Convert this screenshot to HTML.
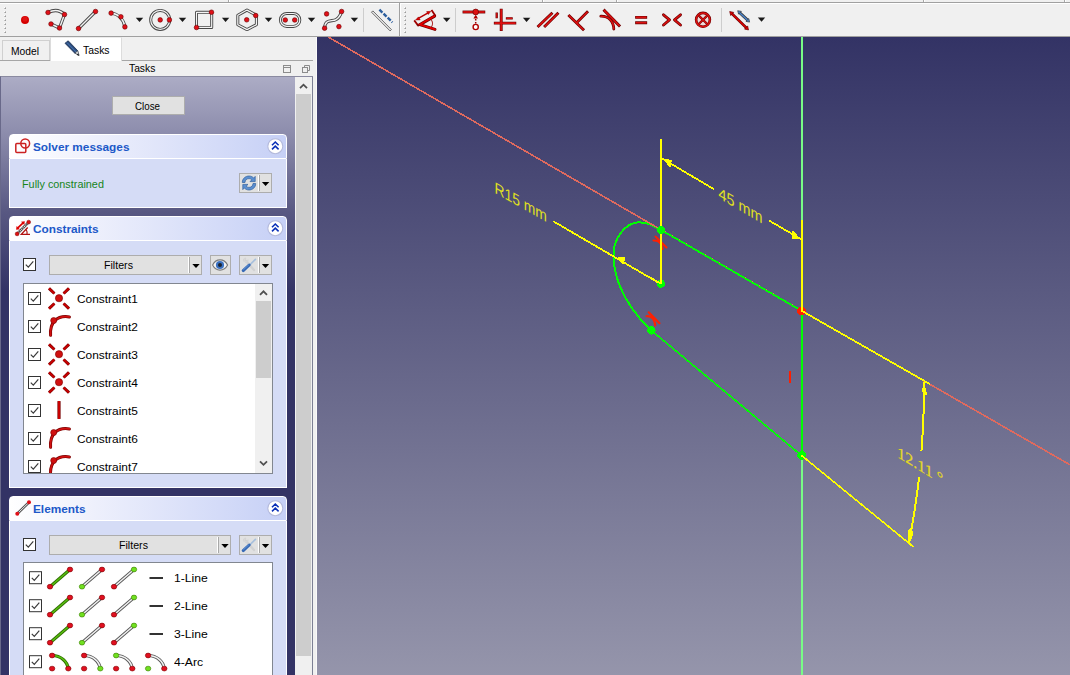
<!DOCTYPE html>
<html>
<head>
<meta charset="utf-8">
<title>FreeCAD Sketcher</title>
<style>
*{box-sizing:border-box;margin:0;padding:0}
html,body{width:1070px;height:675px;overflow:hidden;background:#f0f0f0;font-family:"Liberation Sans",sans-serif;font-size:12px;color:#000}
.abs{position:absolute}
#topline{left:0;top:2px;width:1070px;height:1px;background:#a0a0a0}
#topline2{left:0;top:3px;width:1070px;height:1px;background:#fff}
#tbline{left:0;top:36px;width:1070px;height:1px;background:#a0a0a0}
#canvas{left:317px;top:37px;width:753px;height:638px;background:linear-gradient(#333365 0%,#9595ab 100%)}
#left{left:0;top:37px;width:317px;height:638px;background:#f0f0f0}
.tab{position:absolute;font-size:12px;text-align:center}
#scroll{left:0;top:76px;width:295px;height:599px;border-left:1px solid #69698a;border-top:1px solid #8a8aa0;background:linear-gradient(#acacc5 0px,#8c8cac 57px,#585882 135px,#333365 215px,#333365 100%)}
.box{position:absolute;left:9px;width:278px;background:#d5dcf6;border:1px solid #fff;border-top:none}
.hdr{position:absolute;left:9px;width:278px;height:25px;border:1px solid #fff;border-bottom:1px solid #fff;border-radius:4px 4px 0 0;background:linear-gradient(90deg,#fff 0%,#eef0fc 30%,#c6d0f6 100%);font-weight:bold;color:#215dc6;font-size:12px;line-height:23px;padding-left:23px}
.btn{position:absolute;background:#e1e1e1;border:1px solid #adadad;text-align:center;font-size:12px}
.list{position:absolute;background:#fff;border:1px solid #828790}
.row{position:absolute;left:0;height:28px;font-size:12px}
.t{white-space:nowrap;line-height:14px;transform-origin:0 0;font-size:11px}
.hb{font-weight:bold;color:#2058c8;font-size:11px}
.lt{font-size:11.7px}
.cb{position:absolute;width:13px;height:13px;border:1px solid #333;background:#fff}
</style>
</head>
<body>
<div class="abs" id="topline"></div>
<div class="abs" id="topline2"></div>
<div class="abs" id="tbline"></div>
<svg class="abs" style="left:0;top:0" width="1070" height="37" viewBox="0 0 1070 37">
<rect x="228" y="0" width="1" height="2" fill="#a8a8a8"/><rect x="229" y="0" width="1" height="2" fill="#fff"/><rect x="542" y="0" width="1" height="2" fill="#a8a8a8"/><rect x="543" y="0" width="1" height="2" fill="#fff"/><rect x="616" y="0" width="1" height="2" fill="#a8a8a8"/><rect x="617" y="0" width="1" height="2" fill="#fff"/><rect x="923" y="0" width="1" height="2" fill="#a8a8a8"/><rect x="924" y="0" width="1" height="2" fill="#fff"/><rect x="1064" y="0" width="1" height="2" fill="#a8a8a8"/><rect x="1065" y="0" width="1" height="2" fill="#fff"/><rect x="399" y="3" width="1" height="33" fill="#a0a0a0"/><rect x="400" y="3" width="1" height="33" fill="#fff"/>
<rect x="4" y="7" width="1" height="1" fill="#fff"/><rect x="5" y="7" width="1" height="1" fill="#c4c4c4"/><rect x="4" y="8" width="1" height="1" fill="#c4c4c4"/><rect x="5" y="8" width="1" height="1" fill="#9a9a9a"/><rect x="4" y="11" width="1" height="1" fill="#fff"/><rect x="5" y="11" width="1" height="1" fill="#c4c4c4"/><rect x="4" y="12" width="1" height="1" fill="#c4c4c4"/><rect x="5" y="12" width="1" height="1" fill="#9a9a9a"/><rect x="4" y="15" width="1" height="1" fill="#fff"/><rect x="5" y="15" width="1" height="1" fill="#c4c4c4"/><rect x="4" y="16" width="1" height="1" fill="#c4c4c4"/><rect x="5" y="16" width="1" height="1" fill="#9a9a9a"/><rect x="4" y="19" width="1" height="1" fill="#fff"/><rect x="5" y="19" width="1" height="1" fill="#c4c4c4"/><rect x="4" y="20" width="1" height="1" fill="#c4c4c4"/><rect x="5" y="20" width="1" height="1" fill="#9a9a9a"/><rect x="4" y="23" width="1" height="1" fill="#fff"/><rect x="5" y="23" width="1" height="1" fill="#c4c4c4"/><rect x="4" y="24" width="1" height="1" fill="#c4c4c4"/><rect x="5" y="24" width="1" height="1" fill="#9a9a9a"/><rect x="4" y="27" width="1" height="1" fill="#fff"/><rect x="5" y="27" width="1" height="1" fill="#c4c4c4"/><rect x="4" y="28" width="1" height="1" fill="#c4c4c4"/><rect x="5" y="28" width="1" height="1" fill="#9a9a9a"/><rect x="4" y="31" width="1" height="1" fill="#fff"/><rect x="5" y="31" width="1" height="1" fill="#c4c4c4"/><rect x="4" y="32" width="1" height="1" fill="#c4c4c4"/><rect x="5" y="32" width="1" height="1" fill="#9a9a9a"/>
<rect x="404" y="7" width="1" height="1" fill="#fff"/><rect x="405" y="7" width="1" height="1" fill="#c4c4c4"/><rect x="404" y="8" width="1" height="1" fill="#c4c4c4"/><rect x="405" y="8" width="1" height="1" fill="#9a9a9a"/><rect x="404" y="11" width="1" height="1" fill="#fff"/><rect x="405" y="11" width="1" height="1" fill="#c4c4c4"/><rect x="404" y="12" width="1" height="1" fill="#c4c4c4"/><rect x="405" y="12" width="1" height="1" fill="#9a9a9a"/><rect x="404" y="15" width="1" height="1" fill="#fff"/><rect x="405" y="15" width="1" height="1" fill="#c4c4c4"/><rect x="404" y="16" width="1" height="1" fill="#c4c4c4"/><rect x="405" y="16" width="1" height="1" fill="#9a9a9a"/><rect x="404" y="19" width="1" height="1" fill="#fff"/><rect x="405" y="19" width="1" height="1" fill="#c4c4c4"/><rect x="404" y="20" width="1" height="1" fill="#c4c4c4"/><rect x="405" y="20" width="1" height="1" fill="#9a9a9a"/><rect x="404" y="23" width="1" height="1" fill="#fff"/><rect x="405" y="23" width="1" height="1" fill="#c4c4c4"/><rect x="404" y="24" width="1" height="1" fill="#c4c4c4"/><rect x="405" y="24" width="1" height="1" fill="#9a9a9a"/><rect x="404" y="27" width="1" height="1" fill="#fff"/><rect x="405" y="27" width="1" height="1" fill="#c4c4c4"/><rect x="404" y="28" width="1" height="1" fill="#c4c4c4"/><rect x="405" y="28" width="1" height="1" fill="#9a9a9a"/><rect x="404" y="31" width="1" height="1" fill="#fff"/><rect x="405" y="31" width="1" height="1" fill="#c4c4c4"/><rect x="404" y="32" width="1" height="1" fill="#c4c4c4"/><rect x="405" y="32" width="1" height="1" fill="#9a9a9a"/>
<circle cx="25" cy="20" r="4" fill="#d40000"/><circle cx="25" cy="19" r="2.6" fill="#e82020" opacity="0.6"/>
<path d="M48,12.5 C54,9.5 60,10 64.5,14.5 L59.5,28 L51,24" fill="none" stroke="#474747" stroke-width="3.2" stroke-linecap="round" stroke-linejoin="round"/><path d="M48,12.5 C54,9.5 60,10 64.5,14.5 L59.5,28 L51,24" fill="none" stroke="#f4f4f4" stroke-width="1.4" stroke-linecap="round" stroke-linejoin="round"/>
<circle cx="48" cy="12.5" r="2.3" fill="#e01018" stroke="#6a0000" stroke-width="0.6"/>
<circle cx="64.5" cy="14.5" r="2.3" fill="#e01018" stroke="#6a0000" stroke-width="0.6"/>
<circle cx="51" cy="24" r="2.3" fill="#e01018" stroke="#6a0000" stroke-width="0.6"/>
<circle cx="59.5" cy="28" r="2.3" fill="#e01018" stroke="#6a0000" stroke-width="0.6"/>
<path d="M78.5,28.5 L95.5,11.5" fill="none" stroke="#474747" stroke-width="3.2" stroke-linecap="round" stroke-linejoin="round"/><path d="M78.5,28.5 L95.5,11.5" fill="none" stroke="#f4f4f4" stroke-width="1.4" stroke-linecap="round" stroke-linejoin="round"/>
<circle cx="78.5" cy="28.5" r="2.3" fill="#e01018" stroke="#6a0000" stroke-width="0.6"/>
<circle cx="95.5" cy="11.5" r="2.3" fill="#e01018" stroke="#6a0000" stroke-width="0.6"/>
<path d="M111,13 C118,14 123.5,19 125,27" fill="none" stroke="#474747" stroke-width="3.2" stroke-linecap="round" stroke-linejoin="round"/><path d="M111,13 C118,14 123.5,19 125,27" fill="none" stroke="#f4f4f4" stroke-width="1.4" stroke-linecap="round" stroke-linejoin="round"/>
<circle cx="111.1" cy="13.1" r="2.3" fill="#e01018" stroke="#6a0000" stroke-width="0.6"/>
<circle cx="120.9" cy="16.8" r="2.3" fill="#e01018" stroke="#6a0000" stroke-width="0.6"/>
<circle cx="124.9" cy="26.9" r="2.3" fill="#e01018" stroke="#6a0000" stroke-width="0.6"/>
<polygon points="135.8,17.8 143.2,17.8 139.5,22.0" fill="#1a1a1a"/>
<circle cx="160.2" cy="19.9" r="9.5" fill="none" stroke="#474747" stroke-width="3"/><circle cx="160.2" cy="19.9" r="9.5" fill="none" stroke="#f4f4f4" stroke-width="1.2"/>
<circle cx="160.2" cy="19.9" r="2.3" fill="#e01018" stroke="#6a0000" stroke-width="0.6"/>
<circle cx="169.4" cy="19.9" r="2.3" fill="#e01018" stroke="#6a0000" stroke-width="0.6"/>
<polygon points="178.8,17.8 186.2,17.8 182.5,22.0" fill="#1a1a1a"/>
<path d="M196.5,12.3 H211.7 V27.4 H196.5 Z" fill="none" stroke="#474747" stroke-width="3" stroke-linecap="round" stroke-linejoin="round"/><path d="M196.5,12.3 H211.7 V27.4 H196.5 Z" fill="none" stroke="#f4f4f4" stroke-width="1.2" stroke-linecap="round" stroke-linejoin="round"/>
<circle cx="211.5" cy="12.2" r="2.3" fill="#e01018" stroke="#6a0000" stroke-width="0.6"/>
<circle cx="196.5" cy="27.5" r="2.3" fill="#e01018" stroke="#6a0000" stroke-width="0.6"/>
<polygon points="221.9,17.8 229.29999999999998,17.8 225.6,22.0" fill="#1a1a1a"/>
<path d="M247,10.1 L256.4,15.2 L256.4,24.7 L247,29.6 L237.8,24.7 L237.8,15.2 Z" fill="none" stroke="#474747" stroke-width="3" stroke-linecap="round" stroke-linejoin="round"/><path d="M247,10.1 L256.4,15.2 L256.4,24.7 L247,29.6 L237.8,24.7 L237.8,15.2 Z" fill="none" stroke="#f4f4f4" stroke-width="1.2" stroke-linecap="round" stroke-linejoin="round"/>
<circle cx="246.7" cy="19.8" r="2.3" fill="#e01018" stroke="#6a0000" stroke-width="0.6"/>
<circle cx="255.7" cy="15.5" r="2.3" fill="#e01018" stroke="#6a0000" stroke-width="0.6"/>
<polygon points="264.8,17.8 272.2,17.8 268.5,22.0" fill="#1a1a1a"/>
<rect x="280.4" y="13.5" width="19.4" height="12.9" rx="6.45" fill="none" stroke="#474747" stroke-width="3"/><rect x="280.4" y="13.5" width="19.4" height="12.9" rx="6.45" fill="none" stroke="#f4f4f4" stroke-width="1.2"/>
<circle cx="285.3" cy="20" r="2.3" fill="#e01018" stroke="#6a0000" stroke-width="0.6"/>
<circle cx="294.7" cy="20" r="2.3" fill="#e01018" stroke="#6a0000" stroke-width="0.6"/>
<polygon points="307.8,17.8 315.2,17.8 311.5,22.0" fill="#1a1a1a"/>
<path d="M324.6,28.2 C325,18.5 332,21.8 336,19.6 C339.6,17.6 340.6,15 341.6,11.5" fill="none" stroke="#474747" stroke-width="3.2" stroke-linecap="round" stroke-linejoin="round"/><path d="M324.6,28.2 C325,18.5 332,21.8 336,19.6 C339.6,17.6 340.6,15 341.6,11.5" fill="none" stroke="#f4f4f4" stroke-width="1.4" stroke-linecap="round" stroke-linejoin="round"/>
<circle cx="326.6" cy="13.9" r="2.3" fill="#e01018" stroke="#6a0000" stroke-width="0.6"/>
<circle cx="341.6" cy="11.5" r="2.3" fill="#e01018" stroke="#6a0000" stroke-width="0.6"/>
<circle cx="324.6" cy="28.2" r="2.3" fill="#e01018" stroke="#6a0000" stroke-width="0.6"/>
<circle cx="338.9" cy="26.6" r="2.3" fill="#e01018" stroke="#6a0000" stroke-width="0.6"/>
<polygon points="350.7,17.8 358.09999999999997,17.8 354.4,22.0" fill="#1a1a1a"/>
<rect x="363" y="8" width="1" height="24" fill="#cdcdcd"/>
<path d="M371.5,12.2 L372.8,10.9 L391.4,29.6 L390.1,30.9 Z" fill="#f4f4f4" stroke="#555" stroke-width="0.9"/>
<path d="M379.4,9.6 L392.4,22.3" stroke="#2d5f9e" stroke-width="2.4" stroke-dasharray="4.2,1.6" fill="none"/>
<path d="M414.2,20.4 L418.7,26.3 M431.5,9.9 L435.5,16.1" fill="none" stroke="#a00000" stroke-width="1.8"/><path d="M417.4,18.9 L429,12.3" fill="none" stroke="#b80000" stroke-width="1.5"/><polygon points="415.6,19.9 418.5,16.9 420.2,19.9" fill="#e00000" stroke="#900000" stroke-width="0.5"/><polygon points="430.8,11.3 426.6,11.6 428.3,14.5" fill="#e00000" stroke="#900000" stroke-width="0.5"/><path d="M430.8,19.4 C433,21.5 433,25 431.2,27.2" fill="none" stroke="#a00000" stroke-width="1"/><path d="M434.6,16.1 L419.9,24.6 L435,29.4" fill="none" stroke="#6a0000" stroke-width="3" stroke-linejoin="miter" stroke-linecap="round"/><path d="M434.6,16.1 L419.9,24.6 L435,29.4" fill="none" stroke="#e60000" stroke-width="1.7" stroke-linejoin="miter" stroke-linecap="round"/><polygon points="443.0,17.8 450.4,17.8 446.7,22.0" fill="#1a1a1a"/>
<rect x="455" y="8" width="1" height="24" fill="#cdcdcd"/>
<path d="M464,12 H483.8" fill="none" stroke="#6a0000" stroke-width="2.9" stroke-linecap="square" stroke-linejoin="miter"/><path d="M464,12 H483.8" fill="none" stroke="#dd1010" stroke-width="1.7" stroke-linecap="square" stroke-linejoin="miter"/>
<circle cx="475.7" cy="12" r="2.9" fill="#dd1010" stroke="#6a0000" stroke-width="0.7"/>
<path d="M475.7,16 V23.5" stroke="#a00000" stroke-width="1.5" stroke-dasharray="1.6,1.4" fill="none"/><polygon points="475.7,14.8 473.4,18.4 478,18.4" fill="#b00000"/>
<circle cx="475.7" cy="27" r="2.6" fill="#fff" stroke="#b00000" stroke-width="1.4"/>
<path d="M501.2,10.2 V29.6 M495.3,23.1 H514.8" fill="none" stroke="#6a0000" stroke-width="2.9" stroke-linecap="square" stroke-linejoin="miter"/><path d="M501.2,10.2 V29.6 M495.3,23.1 H514.8" fill="none" stroke="#dd1010" stroke-width="1.7" stroke-linecap="square" stroke-linejoin="miter"/>
<path d="M496.7,13.6 V17.2 M507,18.4 H511.6" fill="none" stroke="#6a0000" stroke-width="2.3" stroke-linecap="square" stroke-linejoin="miter"/><path d="M496.7,13.6 V17.2 M507,18.4 H511.6" fill="none" stroke="#dd1010" stroke-width="1.1" stroke-linecap="square" stroke-linejoin="miter"/>
<polygon points="522.9,17.8 530.3000000000001,17.8 526.6,22.0" fill="#1a1a1a"/>
<path d="M538.6,26 L551.4,13.8 M545.1,26 L557.4,13.8" fill="none" stroke="#6a0000" stroke-width="2.9" stroke-linecap="square" stroke-linejoin="round"/><path d="M538.6,26 L551.4,13.8 M545.1,26 L557.4,13.8" fill="none" stroke="#dd1010" stroke-width="1.6" stroke-linecap="square" stroke-linejoin="round"/>
<path d="M569.4,16 L583,29.3 M587,12.3 L577.4,21.9" fill="none" stroke="#6a0000" stroke-width="2.9" stroke-linecap="square" stroke-linejoin="round"/><path d="M569.4,16 L583,29.3 M587,12.3 L577.4,21.9" fill="none" stroke="#dd1010" stroke-width="1.6" stroke-linecap="square" stroke-linejoin="round"/>
<path d="M604.6,10.7 L619,25.4" fill="none" stroke="#6a0000" stroke-width="3.0" stroke-linecap="square" stroke-linejoin="round"/><path d="M604.6,10.7 L619,25.4" fill="none" stroke="#dd1010" stroke-width="1.7" stroke-linecap="square" stroke-linejoin="round"/>
<path d="M600.8,16.2 C609,16 613.6,21.5 613.8,29" fill="none" stroke="#6a0000" stroke-width="2.8" stroke-linecap="round" stroke-linejoin="round"/><path d="M600.8,16.2 C609,16 613.6,21.5 613.8,29" fill="none" stroke="#dd1010" stroke-width="1.5" stroke-linecap="round" stroke-linejoin="round"/>
<path d="M636.6,17.4 H645.7 M636.6,22.7 H645.7" fill="none" stroke="#6a0000" stroke-width="2.9" stroke-linecap="square" stroke-linejoin="round"/><path d="M636.6,17.4 H645.7 M636.6,22.7 H645.7" fill="none" stroke="#dd1010" stroke-width="1.6" stroke-linecap="square" stroke-linejoin="round"/>
<path d="M663.5,14.8 L669.5,19.9 L663.5,25 M680.5,14.8 L674.5,19.9 L680.5,25" fill="none" stroke="#6a0000" stroke-width="2.9" stroke-linecap="round" stroke-linejoin="round"/><path d="M663.5,14.8 L669.5,19.9 L663.5,25 M680.5,14.8 L674.5,19.9 L680.5,25" fill="none" stroke="#dd1010" stroke-width="1.5" stroke-linecap="round" stroke-linejoin="round"/>
<circle cx="703" cy="19.8" r="6.9" fill="#f0dcdc" stroke="#6a0000" stroke-width="2.6"/><circle cx="703" cy="19.8" r="6.9" fill="none" stroke="#dd1010" stroke-width="1.5"/>
<path d="M698.8,15.6 L707.2,24 M707.2,15.6 L698.8,24" fill="none" stroke="#6a0000" stroke-width="2.2"/><path d="M698.8,15.6 L707.2,24 M707.2,15.6 L698.8,24" fill="none" stroke="#dd1010" stroke-width="1.2"/>
<rect x="721" y="8" width="1" height="24" fill="#cdcdcd"/>
<path d="M731.5,13.3 L746.8,28.2" stroke="#6a0000" stroke-width="2.6" fill="none"/><path d="M731.5,13.3 L746.8,28.2" stroke="#e00000" stroke-width="1.3" fill="none"/><polygon points="729.7,11.5 733.7,12.4 730.7,15.5" fill="#e00000" stroke="#6a0000" stroke-width="0.7"/><polygon points="748.5,29.9 744.5,29.1 747.6,25.9" fill="#e00000" stroke="#6a0000" stroke-width="0.7"/><path d="M739.3,12.4 L748,20.4" stroke="#3a3a3a" stroke-width="2.8" fill="none"/><path d="M739.3,12.4 L748,20.4" stroke="#4a86d0" stroke-width="1.4" fill="none"/><polygon points="737.7,10.7 741.4,11.4 738.6,14.2" fill="#4a86d0" stroke="#3a3a3a" stroke-width="0.7"/><polygon points="749.6,22.1 745.9,21.4 748.8,18.6" fill="#4a86d0" stroke="#3a3a3a" stroke-width="0.7"/><polygon points="757.8,17.6 765.2,17.6 761.5,21.8" fill="#1a1a1a"/>
</svg>
<div class="abs" id="left">
</div>
<div class="abs" id="scroll"></div>
<div class="abs" style="left:316px;top:37px;width:1px;height:638px;background:#fafafa"></div>
<div class="abs" style="left:312px;top:76px;width:1px;height:599px;background:#7c8094"></div>
<div class="abs" style="left:0;top:60px;width:313px;height:1px;background:#a6a6a6"></div>
<div class="abs" style="left:2px;top:40px;width:48px;height:20px;border:1px solid #d0d0d0;border-bottom:none;background:#f0f0f0"></div>
<div class="abs" style="left:50px;top:37px;width:72px;height:24px;border:1px solid #dcdcdc;border-top:1px solid #ececec;border-bottom:none;background:#fff"></div>
<div class="abs t" id="t_model" style="left:11.0px;top:44.0px;transform:scaleX(0.933)">Model</div>
<div class="abs t" id="t_tasks1" style="left:83.0px;top:43.0px;transform:scaleX(0.944)">Tasks</div>
<svg class="abs" style="left:62px;top:39px" width="20" height="20" viewBox="0 0 20 20"><path d="M3,4.3 L6.2,1.8 L15.8,11.8 L12.8,14.2 Z" fill="#2a4a7c" stroke="#1b2f50" stroke-width="0.8"/><path d="M5,3.6 L14.4,13.2" stroke="#4f7fbc" stroke-width="0.9"/><path d="M12.8,14.2 L15.8,11.8 L17,16.2 Z" fill="#f0f0f0" stroke="#39424f" stroke-width="0.8"/><path d="M15.4,14.9 L17.2,16.4 L15.2,15.9Z" fill="#1a1a1a" stroke="#1a1a1a" stroke-width="0.5"/></svg>
<div class="abs t" id="t_tasks2" style="left:129.0px;top:61.0px;transform:scaleX(0.936)">Tasks</div>
<svg class="abs" style="left:282px;top:64px" width="30" height="10" viewBox="282 64 30 10"><rect x="283.5" y="65.5" width="7" height="7" fill="none" stroke="#8c8c8c"/><line x1="283" y1="67.5" x2="291" y2="67.5" stroke="#8c8c8c"/><rect x="302.5" y="67.5" width="5" height="5" fill="none" stroke="#8c8c8c"/><path d="M304.5,67 V65.5 H309.5 V70.5 H308" fill="none" stroke="#8c8c8c"/></svg>
<div class="abs" style="left:295px;top:76px;width:18px;height:1px;background:#8a8aa0"></div><div class="abs" style="left:295px;top:77px;width:17px;height:598px;background:#f0f0f0"></div>
<div class="abs" style="left:296px;top:94px;width:15px;height:562px;background:#cdcdcd"></div>
<svg class="abs" style="left:295px;top:77px" width="17" height="17" viewBox="0 0 17 17"><path d="M5,11.2 L8.5,7.7 L12,11.2" fill="none" stroke="#505050" stroke-width="1.8"/></svg>
<div class="btn" style="left:112px;top:96px;width:73px;height:19px"></div>
<div class="abs t" id="t_close" style="left:134.7px;top:99.0px;transform:scaleX(0.887)">Close</div>
<div class="hdr" style="top:134px"></div>
<div class="abs t hb" id="t_solver" style="left:32.6px;top:140.0px;transform:scaleX(1.073)">Solver messages</div>
<svg class="abs" style="left:13px;top:136px" width="18" height="20" viewBox="13 136 18 20"><rect x="15.8" y="143.6" width="10" height="9" rx="1" fill="none" stroke="#cc2222" stroke-width="1.5"/><circle cx="25.2" cy="143.5" r="4.4" fill="none" stroke="#cc2222" stroke-width="1.5"/></svg>
<svg class="abs" style="left:266px;top:137px" width="18" height="18" viewBox="0 0 18 18"><circle cx="9.3" cy="9.2" r="7.5" fill="#fff" stroke="#b4badc" stroke-width="1.1"/><path d="M6,8.2 L9.3,5 L12.6,8.2 M6,12.4 L9.3,9.2 L12.6,12.4" fill="none" stroke="#0a30b8" stroke-width="1.6"/></svg>
<div class="box" style="top:159px;height:49px"></div>
<div class="abs t" id="t_fully" style="left:21.8px;top:177.0px;transform:scaleX(0.985);font-size:11px;color:#15851a">Fully constrained</div>
<div class="btn" style="left:239px;top:173px;width:33px;height:20px"></div>
<div class="abs" style="left:258px;top:175px;width:1px;height:16px;background:#fff"></div><div class="abs" style="left:259px;top:175px;width:1px;height:16px;background:#a8a8a8"></div>
<svg class="abs" style="left:239px;top:173px" width="33" height="20" viewBox="240 173 33 20"><path d="M243.3,182.5 C243.3,178.5 246.5,176 250,176 C252,176 253.6,176.8 254.6,178 L256.2,176.4 L256.2,181.6 L251,181.6 L252.8,179.8 C252,179 251,178.6 250,178.6 C247.8,178.6 246,180.2 246,182.5 Z" fill="#5b8fd0" stroke="#2f5f9e" stroke-width="0.7"/><path d="M256.7,183.5 C256.7,187.5 253.5,190 250,190 C248,190 246.4,189.2 245.4,188 L243.8,189.6 L243.8,184.4 L249,184.4 L247.2,186.2 C248,187 249,187.4 250,187.4 C252.2,187.4 254,185.8 254,183.5 Z" fill="#5b8fd0" stroke="#2f5f9e" stroke-width="0.7"/><polygon points="262.9,182 270.3,182 266.6,186" fill="#000"/></svg>
<div class="hdr" style="top:216px"></div>
<div class="abs t hb" id="t_constraints" style="left:32.8px;top:222.0px;transform:scaleX(1.073)">Constraints</div>
<svg class="abs" style="left:13px;top:218px" width="20" height="20" viewBox="13 218 20 20"><path d="M17.1,233.9 L28.7,222.1" stroke="#444" stroke-width="2.6"/><path d="M17.1,233.9 L28.7,222.1" stroke="#eee" stroke-width="1.3" stroke-dasharray="1,1"/><circle cx="17.1" cy="233.9" r="1.9" fill="#dd1010" stroke="#800" stroke-width="0.5"/><circle cx="28.7" cy="222.1" r="1.9" fill="#dd1010" stroke="#800" stroke-width="0.5"/><path d="M17.6,228.2 L23.4,222.7" stroke="#dd0000" stroke-width="1.7"/><polygon points="16.1,229.7 16.6,225.9 19.9,229.2" fill="#dd0000"/><polygon points="24.8,221.3 21,221.8 24.3,225.1" fill="#dd0000"/><path d="M30,234.4 H21.3 L27.7,227.5" fill="none" stroke="#b01010" stroke-width="1.3"/><path d="M26.2,229.6 C27,231 27.2,232.6 27,234.2" fill="none" stroke="#b01010" stroke-width="1.1"/></svg>
<svg class="abs" style="left:266px;top:219px" width="18" height="18" viewBox="0 0 18 18"><circle cx="9.3" cy="9.2" r="7.5" fill="#fff" stroke="#b4badc" stroke-width="1.1"/><path d="M6,8.2 L9.3,5 L12.6,8.2 M6,12.4 L9.3,9.2 L12.6,12.4" fill="none" stroke="#0a30b8" stroke-width="1.6"/></svg>
<div class="box" style="top:241px;height:247px"></div>
<svg class="abs" style="left:23px;top:258px" width="13" height="13" viewBox="0 0 13 13"><rect x="0.5" y="0.5" width="12" height="12" fill="#fff" stroke="#333"/><path d="M2.8,6.6 L5.3,9.2 L10.3,3.4" fill="none" stroke="#3a3a3a" stroke-width="1.2"/></svg>
<div class="btn" style="left:49px;top:255px;width:153px;height:20px"></div>
<div class="abs" style="left:188px;top:257px;width:1px;height:16px;background:#fff"></div><div class="abs" style="left:189px;top:257px;width:1px;height:16px;background:#a8a8a8"></div>
<svg class="abs" style="left:190px;top:255px" width="12" height="20" viewBox="0 0 12 20"><polygon points="2.3,8.9 9.7,8.9 6,13" fill="#000"/></svg>
<div class="abs t" id="t_filters1" style="left:104.2px;top:257.5px;transform:scaleX(0.967)">Filters</div>
<div class="btn" style="left:210px;top:255px;width:21px;height:20px"></div>
<svg class="abs" style="left:210px;top:255px" width="21" height="20" viewBox="0 0 21 20"><path d="M2.6,10 C6,3.2 14,3.2 17.6,10 C14,16.8 6,16.8 2.6,10 Z" fill="#f4f4f4" stroke="#7a7a7a" stroke-width="1.1"/><circle cx="10" cy="10" r="4.1" fill="#3b72c2"/><circle cx="10" cy="10" r="2" fill="#1c2430"/></svg>
<div class="btn" style="left:239px;top:255px;width:33px;height:20px"></div><div class="abs" style="left:258px;top:257px;width:1px;height:16px;background:#fff"></div><div class="abs" style="left:259px;top:257px;width:1px;height:16px;background:#a8a8a8"></div><svg class="abs" style="left:239px;top:255px" width="33" height="20" viewBox="0 0 33 20"><path d="M6.5,5.5 L15,15" stroke="#d2d2d2" stroke-width="2.4" stroke-linecap="round"/><path d="M4.6,6.4 C3.6,4.4 5.2,2.6 7,3 L6,5 L7.6,6.2 L9,4.6 C9.8,6.4 8,8.2 6.2,7.6" fill="#d8d8d8" stroke="#cfcfcf" stroke-width="0.5"/><path d="M10.8,9.8 L16.4,4.4" stroke="#a8c0dc" stroke-width="1.7" stroke-linecap="round"/><path d="M4.2,15.6 L10.2,10" stroke="#3568b4" stroke-width="3" stroke-linecap="round"/><path d="M4.6,14.6 L9.6,10" stroke="#6a98d8" stroke-width="0.9" stroke-linecap="round"/><polygon points="22.8,8.9 30.2,8.9 26.5,13" fill="#000"/></svg>
<div class="list" style="left:23px;top:283px;width:250px;height:191px;overflow:hidden" id="clist"><svg class="abs" style="left:0;top:0" width="248" height="189" viewBox="24 284 248 189">
<rect x="28.5" y="292.5" width="12" height="12" fill="#fff" stroke="#333"/><path d="M30.8,298.6 L33.3,301.2 L38.3,295.4" fill="none" stroke="#3a3a3a" stroke-width="1.2"/>
<path d="M49,288.3 L54.4,293.5" fill="none" stroke="#7a0000" stroke-width="3" stroke-linecap="butt"/><path d="M49,288.3 L54.4,293.5" fill="none" stroke="#c80000" stroke-width="1.8" stroke-linecap="butt"/><path d="M49,308.7 L54.4,303.5" fill="none" stroke="#7a0000" stroke-width="3" stroke-linecap="butt"/><path d="M49,308.7 L54.4,303.5" fill="none" stroke="#c80000" stroke-width="1.8" stroke-linecap="butt"/><path d="M69,288.3 L63.6,293.5" fill="none" stroke="#7a0000" stroke-width="3" stroke-linecap="butt"/><path d="M69,288.3 L63.6,293.5" fill="none" stroke="#c80000" stroke-width="1.8" stroke-linecap="butt"/><path d="M69,308.7 L63.6,303.5" fill="none" stroke="#7a0000" stroke-width="3" stroke-linecap="butt"/><path d="M69,308.7 L63.6,303.5" fill="none" stroke="#c80000" stroke-width="1.8" stroke-linecap="butt"/><circle cx="59" cy="298.2" r="3.6" fill="#d01010" stroke="#7a0000" stroke-width="0.6"/>
<rect x="28.5" y="320.5" width="12" height="12" fill="#fff" stroke="#333"/><path d="M30.8,326.6 L33.3,329.2 L38.3,323.4" fill="none" stroke="#3a3a3a" stroke-width="1.2"/>
<path d="M69.4,316.9 C57,315.0 49.5,322.5 50.6,335.3" fill="none" stroke="#7a0000" stroke-width="3" stroke-linecap="round"/><path d="M69.4,316.9 C57,315.0 49.5,322.5 50.6,335.3" fill="none" stroke="#d01010" stroke-width="1.7" stroke-linecap="round"/><circle cx="53.7" cy="320.5" r="3" fill="#d01010" stroke="#7a0000" stroke-width="0.6"/>
<rect x="28.5" y="348.5" width="12" height="12" fill="#fff" stroke="#333"/><path d="M30.8,354.6 L33.3,357.2 L38.3,351.4" fill="none" stroke="#3a3a3a" stroke-width="1.2"/>
<path d="M49,344.3 L54.4,349.5" fill="none" stroke="#7a0000" stroke-width="3" stroke-linecap="butt"/><path d="M49,344.3 L54.4,349.5" fill="none" stroke="#c80000" stroke-width="1.8" stroke-linecap="butt"/><path d="M49,364.7 L54.4,359.5" fill="none" stroke="#7a0000" stroke-width="3" stroke-linecap="butt"/><path d="M49,364.7 L54.4,359.5" fill="none" stroke="#c80000" stroke-width="1.8" stroke-linecap="butt"/><path d="M69,344.3 L63.6,349.5" fill="none" stroke="#7a0000" stroke-width="3" stroke-linecap="butt"/><path d="M69,344.3 L63.6,349.5" fill="none" stroke="#c80000" stroke-width="1.8" stroke-linecap="butt"/><path d="M69,364.7 L63.6,359.5" fill="none" stroke="#7a0000" stroke-width="3" stroke-linecap="butt"/><path d="M69,364.7 L63.6,359.5" fill="none" stroke="#c80000" stroke-width="1.8" stroke-linecap="butt"/><circle cx="59" cy="354.2" r="3.6" fill="#d01010" stroke="#7a0000" stroke-width="0.6"/>
<rect x="28.5" y="376.5" width="12" height="12" fill="#fff" stroke="#333"/><path d="M30.8,382.6 L33.3,385.2 L38.3,379.4" fill="none" stroke="#3a3a3a" stroke-width="1.2"/>
<path d="M49,372.3 L54.4,377.5" fill="none" stroke="#7a0000" stroke-width="3" stroke-linecap="butt"/><path d="M49,372.3 L54.4,377.5" fill="none" stroke="#c80000" stroke-width="1.8" stroke-linecap="butt"/><path d="M49,392.7 L54.4,387.5" fill="none" stroke="#7a0000" stroke-width="3" stroke-linecap="butt"/><path d="M49,392.7 L54.4,387.5" fill="none" stroke="#c80000" stroke-width="1.8" stroke-linecap="butt"/><path d="M69,372.3 L63.6,377.5" fill="none" stroke="#7a0000" stroke-width="3" stroke-linecap="butt"/><path d="M69,372.3 L63.6,377.5" fill="none" stroke="#c80000" stroke-width="1.8" stroke-linecap="butt"/><path d="M69,392.7 L63.6,387.5" fill="none" stroke="#7a0000" stroke-width="3" stroke-linecap="butt"/><path d="M69,392.7 L63.6,387.5" fill="none" stroke="#c80000" stroke-width="1.8" stroke-linecap="butt"/><circle cx="59" cy="382.2" r="3.6" fill="#d01010" stroke="#7a0000" stroke-width="0.6"/>
<rect x="28.5" y="404.5" width="12" height="12" fill="#fff" stroke="#333"/><path d="M30.8,410.6 L33.3,413.2 L38.3,407.4" fill="none" stroke="#3a3a3a" stroke-width="1.2"/>
<path d="M59,401.1 V418.9" fill="none" stroke="#7a0000" stroke-width="3.2" stroke-linecap="butt"/><path d="M59,401.1 V418.9" fill="none" stroke="#c80000" stroke-width="2.0" stroke-linecap="butt"/>
<rect x="28.5" y="432.5" width="12" height="12" fill="#fff" stroke="#333"/><path d="M30.8,438.6 L33.3,441.2 L38.3,435.4" fill="none" stroke="#3a3a3a" stroke-width="1.2"/>
<path d="M69.4,428.9 C57,427.0 49.5,434.5 50.6,447.3" fill="none" stroke="#7a0000" stroke-width="3" stroke-linecap="round"/><path d="M69.4,428.9 C57,427.0 49.5,434.5 50.6,447.3" fill="none" stroke="#d01010" stroke-width="1.7" stroke-linecap="round"/><circle cx="53.7" cy="432.5" r="3" fill="#d01010" stroke="#7a0000" stroke-width="0.6"/>
<rect x="28.5" y="460.5" width="12" height="12" fill="#fff" stroke="#333"/><path d="M30.8,466.6 L33.3,469.2 L38.3,463.4" fill="none" stroke="#3a3a3a" stroke-width="1.2"/>
<path d="M69.4,456.9 C57,455.0 49.5,462.5 50.6,475.3" fill="none" stroke="#7a0000" stroke-width="3" stroke-linecap="round"/><path d="M69.4,456.9 C57,455.0 49.5,462.5 50.6,475.3" fill="none" stroke="#d01010" stroke-width="1.7" stroke-linecap="round"/><circle cx="53.7" cy="460.5" r="3" fill="#d01010" stroke="#7a0000" stroke-width="0.6"/>
</svg>
<div class="abs t lt" id="t_c1" style="left:53.2px;top:8.3px;transform:scaleX(1.019)">Constraint1</div>
<div class="abs t lt" id="t_c2" style="left:53.2px;top:36.3px;transform:scaleX(1.019)">Constraint2</div>
<div class="abs t lt" id="t_c3" style="left:53.2px;top:64.3px;transform:scaleX(1.019)">Constraint3</div>
<div class="abs t lt" id="t_c4" style="left:53.2px;top:92.3px;transform:scaleX(1.019)">Constraint4</div>
<div class="abs t lt" id="t_c5" style="left:53.2px;top:120.3px;transform:scaleX(1.019)">Constraint5</div>
<div class="abs t lt" id="t_c6" style="left:53.2px;top:148.3px;transform:scaleX(1.019)">Constraint6</div>
<div class="abs t lt" id="t_c7" style="left:53.2px;top:176.3px;transform:scaleX(1.019)">Constraint7</div>
<div class="abs" style="left:231px;top:0;width:17px;height:189px;background:#f0f0f0"></div>
<div class="abs" style="left:232px;top:17px;width:15px;height:77px;background:#cdcdcd"></div>
<svg class="abs" style="left:231px;top:0" width="17" height="189" viewBox="0 0 17 189"><path d="M5,10.8 L8.5,7.3 L12,10.8" fill="none" stroke="#505050" stroke-width="1.8"/><path d="M5,177.3 L8.5,180.8 L12,177.3" fill="none" stroke="#505050" stroke-width="1.8"/></svg></div>
<div class="hdr" style="top:496px"></div>
<div class="abs t hb" id="t_elements" style="left:32.8px;top:502.0px;transform:scaleX(1.073)">Elements</div>
<svg class="abs" style="left:13px;top:498px" width="20" height="20" viewBox="13 498 20 20"><path d="M17.5,513.5 L28.8,502.5" stroke="#555" stroke-width="2.6"/><path d="M17.5,513.5 L28.8,502.5" stroke="#e8e8e8" stroke-width="1"/><circle cx="17.3" cy="513.8" r="2" fill="#e01018"/><circle cx="29" cy="502.3" r="2" fill="#e01018"/></svg>
<svg class="abs" style="left:266px;top:499px" width="18" height="18" viewBox="0 0 18 18"><circle cx="9.3" cy="9.2" r="7.5" fill="#fff" stroke="#b4badc" stroke-width="1.1"/><path d="M6,8.2 L9.3,5 L12.6,8.2 M6,12.4 L9.3,9.2 L12.6,12.4" fill="none" stroke="#0a30b8" stroke-width="1.6"/></svg>
<div class="box" style="top:521px;height:160px"></div>
<svg class="abs" style="left:23px;top:538px" width="13" height="13" viewBox="0 0 13 13"><rect x="0.5" y="0.5" width="12" height="12" fill="#fff" stroke="#333"/><path d="M2.8,6.6 L5.3,9.2 L10.3,3.4" fill="none" stroke="#3a3a3a" stroke-width="1.2"/></svg>
<div class="btn" style="left:49px;top:535px;width:182px;height:20px"></div>
<div class="abs" style="left:217px;top:537px;width:1px;height:16px;background:#fff"></div><div class="abs" style="left:218px;top:537px;width:1px;height:16px;background:#a8a8a8"></div>
<svg class="abs" style="left:219px;top:535px" width="12" height="20" viewBox="0 0 12 20"><polygon points="2.3,8.9 9.7,8.9 6,13" fill="#000"/></svg>
<div class="abs t" id="t_filters2" style="left:118.7px;top:537.5px;transform:scaleX(0.967)">Filters</div>
<div class="btn" style="left:239px;top:535px;width:33px;height:20px"></div><div class="abs" style="left:258px;top:537px;width:1px;height:16px;background:#fff"></div><div class="abs" style="left:259px;top:537px;width:1px;height:16px;background:#a8a8a8"></div><svg class="abs" style="left:239px;top:535px" width="33" height="20" viewBox="0 0 33 20"><path d="M6.5,5.5 L15,15" stroke="#d2d2d2" stroke-width="2.4" stroke-linecap="round"/><path d="M4.6,6.4 C3.6,4.4 5.2,2.6 7,3 L6,5 L7.6,6.2 L9,4.6 C9.8,6.4 8,8.2 6.2,7.6" fill="#d8d8d8" stroke="#cfcfcf" stroke-width="0.5"/><path d="M10.8,9.8 L16.4,4.4" stroke="#a8c0dc" stroke-width="1.7" stroke-linecap="round"/><path d="M4.2,15.6 L10.2,10" stroke="#3568b4" stroke-width="3" stroke-linecap="round"/><path d="M4.6,14.6 L9.6,10" stroke="#6a98d8" stroke-width="0.9" stroke-linecap="round"/><polygon points="22.8,8.9 30.2,8.9 26.5,13" fill="#000"/></svg>
<div class="list" style="left:23px;top:562px;width:250px;height:120px;overflow:hidden" id="elist"><svg class="abs" style="left:0;top:0" width="248" height="118" viewBox="24 563 248 118">
<rect x="29.5" y="571.7" width="12" height="12" fill="#fff" stroke="#333"/><path d="M31.8,577.8000000000001 L34.3,580.4000000000001 L39.3,574.6" fill="none" stroke="#3a3a3a" stroke-width="1.2"/>
<path d="M50,586.7 L70,569.5" stroke="#2f6a00" stroke-width="3.2" fill="none"/><path d="M50,586.7 L70,569.5" stroke="#58c010" stroke-width="1.5" fill="none"/><ellipse cx="50" cy="586.7" rx="2.7" ry="2.4" fill="#e01020" stroke="#800000" stroke-width="0.6"/><ellipse cx="70" cy="569.5" rx="2.7" ry="2.4" fill="#e01020" stroke="#800000" stroke-width="0.6"/>
<path d="M82,586.7 L102,569.5" stroke="#555" stroke-width="3.2" fill="none"/><path d="M82,586.7 L102,569.5" stroke="#f2f2f2" stroke-width="1.5" fill="none"/><ellipse cx="82" cy="586.7" rx="2.7" ry="2.4" fill="#70e020" stroke="#3a7a00" stroke-width="0.6"/><ellipse cx="102" cy="569.5" rx="2.7" ry="2.4" fill="#e01020" stroke="#800000" stroke-width="0.6"/>
<path d="M114,586.7 L134,569.5" stroke="#555" stroke-width="3.2" fill="none"/><path d="M114,586.7 L134,569.5" stroke="#f2f2f2" stroke-width="1.5" fill="none"/><ellipse cx="114" cy="586.7" rx="2.7" ry="2.4" fill="#e01020" stroke="#800000" stroke-width="0.6"/><ellipse cx="134" cy="569.5" rx="2.7" ry="2.4" fill="#70e020" stroke="#3a7a00" stroke-width="0.6"/>
<rect x="149.5" y="577.0" width="13.5" height="2" fill="#333"/>
<rect x="29.5" y="599.7" width="12" height="12" fill="#fff" stroke="#333"/><path d="M31.8,605.8000000000001 L34.3,608.4000000000001 L39.3,602.6" fill="none" stroke="#3a3a3a" stroke-width="1.2"/>
<path d="M50,614.7 L70,597.5" stroke="#2f6a00" stroke-width="3.2" fill="none"/><path d="M50,614.7 L70,597.5" stroke="#58c010" stroke-width="1.5" fill="none"/><ellipse cx="50" cy="614.7" rx="2.7" ry="2.4" fill="#e01020" stroke="#800000" stroke-width="0.6"/><ellipse cx="70" cy="597.5" rx="2.7" ry="2.4" fill="#e01020" stroke="#800000" stroke-width="0.6"/>
<path d="M82,614.7 L102,597.5" stroke="#555" stroke-width="3.2" fill="none"/><path d="M82,614.7 L102,597.5" stroke="#f2f2f2" stroke-width="1.5" fill="none"/><ellipse cx="82" cy="614.7" rx="2.7" ry="2.4" fill="#70e020" stroke="#3a7a00" stroke-width="0.6"/><ellipse cx="102" cy="597.5" rx="2.7" ry="2.4" fill="#e01020" stroke="#800000" stroke-width="0.6"/>
<path d="M114,614.7 L134,597.5" stroke="#555" stroke-width="3.2" fill="none"/><path d="M114,614.7 L134,597.5" stroke="#f2f2f2" stroke-width="1.5" fill="none"/><ellipse cx="114" cy="614.7" rx="2.7" ry="2.4" fill="#e01020" stroke="#800000" stroke-width="0.6"/><ellipse cx="134" cy="597.5" rx="2.7" ry="2.4" fill="#70e020" stroke="#3a7a00" stroke-width="0.6"/>
<rect x="149.5" y="605.0" width="13.5" height="2" fill="#333"/>
<rect x="29.5" y="627.7" width="12" height="12" fill="#fff" stroke="#333"/><path d="M31.8,633.8000000000001 L34.3,636.4000000000001 L39.3,630.6" fill="none" stroke="#3a3a3a" stroke-width="1.2"/>
<path d="M50,642.7 L70,625.5" stroke="#2f6a00" stroke-width="3.2" fill="none"/><path d="M50,642.7 L70,625.5" stroke="#58c010" stroke-width="1.5" fill="none"/><ellipse cx="50" cy="642.7" rx="2.7" ry="2.4" fill="#e01020" stroke="#800000" stroke-width="0.6"/><ellipse cx="70" cy="625.5" rx="2.7" ry="2.4" fill="#e01020" stroke="#800000" stroke-width="0.6"/>
<path d="M82,642.7 L102,625.5" stroke="#555" stroke-width="3.2" fill="none"/><path d="M82,642.7 L102,625.5" stroke="#f2f2f2" stroke-width="1.5" fill="none"/><ellipse cx="82" cy="642.7" rx="2.7" ry="2.4" fill="#70e020" stroke="#3a7a00" stroke-width="0.6"/><ellipse cx="102" cy="625.5" rx="2.7" ry="2.4" fill="#e01020" stroke="#800000" stroke-width="0.6"/>
<path d="M114,642.7 L134,625.5" stroke="#555" stroke-width="3.2" fill="none"/><path d="M114,642.7 L134,625.5" stroke="#f2f2f2" stroke-width="1.5" fill="none"/><ellipse cx="114" cy="642.7" rx="2.7" ry="2.4" fill="#e01020" stroke="#800000" stroke-width="0.6"/><ellipse cx="134" cy="625.5" rx="2.7" ry="2.4" fill="#70e020" stroke="#3a7a00" stroke-width="0.6"/>
<rect x="149.5" y="633.0" width="13.5" height="2" fill="#333"/>
<rect x="29.5" y="655.7" width="12" height="12" fill="#fff" stroke="#333"/><path d="M31.8,661.8000000000001 L34.3,664.4000000000001 L39.3,658.6" fill="none" stroke="#3a3a3a" stroke-width="1.2"/>
<path d="M52.1,655.5 C61.1,655.5 67.3,661.6 68.3,668.6" stroke="#2f6a00" stroke-width="3.2" fill="none"/><path d="M52.1,655.5 C61.1,655.5 67.3,661.6 68.3,668.6" stroke="#58c010" stroke-width="1.5" fill="none"/><ellipse cx="52.1" cy="655.5" rx="2.7" ry="2.4" fill="#e01020" stroke="#800000" stroke-width="0.6"/><ellipse cx="52.1" cy="668.6" rx="2.7" ry="2.4" fill="#e01020" stroke="#800000" stroke-width="0.6"/><ellipse cx="68.3" cy="668.6" rx="2.7" ry="2.4" fill="#e01020" stroke="#800000" stroke-width="0.6"/>
<path d="M84.1,655.5 C93.1,655.5 99.3,661.6 100.3,668.6" stroke="#555" stroke-width="3.2" fill="none"/><path d="M84.1,655.5 C93.1,655.5 99.3,661.6 100.3,668.6" stroke="#f2f2f2" stroke-width="1.5" fill="none"/><ellipse cx="84.1" cy="655.5" rx="2.7" ry="2.4" fill="#e01020" stroke="#800000" stroke-width="0.6"/><ellipse cx="84.1" cy="668.6" rx="2.7" ry="2.4" fill="#e01020" stroke="#800000" stroke-width="0.6"/><ellipse cx="100.3" cy="668.6" rx="2.7" ry="2.4" fill="#70e020" stroke="#3a7a00" stroke-width="0.6"/>
<path d="M116.1,655.5 C125.1,655.5 131.29999999999998,661.6 132.29999999999998,668.6" stroke="#555" stroke-width="3.2" fill="none"/><path d="M116.1,655.5 C125.1,655.5 131.29999999999998,661.6 132.29999999999998,668.6" stroke="#f2f2f2" stroke-width="1.5" fill="none"/><ellipse cx="116.1" cy="655.5" rx="2.7" ry="2.4" fill="#70e020" stroke="#3a7a00" stroke-width="0.6"/><ellipse cx="116.1" cy="668.6" rx="2.7" ry="2.4" fill="#e01020" stroke="#800000" stroke-width="0.6"/><ellipse cx="132.29999999999998" cy="668.6" rx="2.7" ry="2.4" fill="#e01020" stroke="#800000" stroke-width="0.6"/>
<path d="M148.1,655.5 C157.1,655.5 163.29999999999998,661.6 164.29999999999998,668.6" stroke="#555" stroke-width="3.2" fill="none"/><path d="M148.1,655.5 C157.1,655.5 163.29999999999998,661.6 164.29999999999998,668.6" stroke="#f2f2f2" stroke-width="1.5" fill="none"/><ellipse cx="148.1" cy="655.5" rx="2.7" ry="2.4" fill="#e01020" stroke="#800000" stroke-width="0.6"/><ellipse cx="148.1" cy="668.6" rx="2.7" ry="2.4" fill="#70e020" stroke="#3a7a00" stroke-width="0.6"/><ellipse cx="164.29999999999998" cy="668.6" rx="2.7" ry="2.4" fill="#e01020" stroke="#800000" stroke-width="0.6"/>
</svg>
<div class="abs t lt" id="t_e1" style="left:149.6px;top:7.5px;transform:scaleX(1.042)">1-Line</div>
<div class="abs t lt" id="t_e2" style="left:149.6px;top:35.5px;transform:scaleX(1.042)">2-Line</div>
<div class="abs t lt" id="t_e3" style="left:149.6px;top:63.5px;transform:scaleX(1.042)">3-Line</div>
<div class="abs t lt" id="t_e4" style="left:149.6px;top:91.5px;transform:scaleX(1.042)">4-Arc</div></div>
<div class="abs" id="canvas">
<svg width="753" height="638" viewBox="317 37 753 638" style="position:absolute;left:0;top:0">

<!-- tangent icons -->
<g fill="none" stroke="#ff2000" stroke-width="2.1" stroke-linecap="round">
<path d="M655.5,236.5 L666.5,247.5"/>
<path d="M653.5,240.5 C658,240 661.5,243 662.5,249"/>
<path d="M648.7,312.3 L659.5,323.2"/>
<path d="M646.5,316.2 C651,315.8 654.5,319 655.3,325.5"/>
</g>
<g shape-rendering="crispEdges" fill="none">
<!-- red H axis -->
<polyline points="327.6,36.6 660.4,229.4 801.3,310.4 1070,464.8" stroke="#e06a5e" stroke-width="1.6"/>


<!-- V axis light green -->
<rect x="801" y="37" width="2" height="638" fill="#78fc86" stroke="none"/>
<!-- yellow ext line on V axis -->
<rect x="801" y="220" width="2" height="91" fill="#ffff00" stroke="none"/>
<!-- green sketch vertical -->
<rect x="801" y="311" width="2" height="145" fill="#00ff00" stroke="none"/>
<!-- yellow ext vertical at 660 -->
<rect x="660" y="139" width="2" height="145" fill="#ffff00" stroke="none"/>
<!-- green sketch lines -->
<line x1="660.4" y1="229.6" x2="801.3" y2="310.6" stroke="#00ff00" stroke-width="1.75"/>
<line x1="651.3" y1="330.4" x2="801.3" y2="455.3" stroke="#00ff00" stroke-width="1.6"/>
<!-- arc -->
<path id="arc" d="M660.4,229.6 C652,224.5 645,222.3 639,222.3 C628,222.3 618,233 614.5,246 C612,262 616,276 619,284 C625,300 636,316 651.3,330.4" stroke="#00ff00" stroke-width="2"/>
<line x1="327.6" y1="36.6" x2="660.4" y2="229.4" stroke="#e06a5e" stroke-width="1.6"/>
<!-- dimension 45mm -->
<line x1="662" y1="158.5" x2="714" y2="189.2" stroke="#ffff00" stroke-width="1.75"/>
<line x1="769" y1="220.6" x2="801" y2="239" stroke="#ffff00" stroke-width="1.75"/>
<polygon points="661.8,158 671.8,160.2 670.4,168" fill="#ffff00" stroke="none"/>
<polygon points="801.4,239.6 791.4,238.4 792.6,230.4" fill="#ffff00" stroke="none"/>
<!-- radius line -->
<line x1="553.5" y1="221.4" x2="660.4" y2="283.8" stroke="#ffff00" stroke-width="1.75"/>
<polygon points="617.2,256.6 625.4,257.3 623.3,265.2" fill="#ffff00" stroke="none"/>
<!-- right yellow lines -->
<line x1="801.3" y1="310.6" x2="930" y2="384.2" stroke="#ffff00" stroke-width="1.75"/>
<line x1="801.3" y1="455.3" x2="913.7" y2="547.1" stroke="#ffff00" stroke-width="1.6"/>
<!-- angle arc -->
<path d="M924.3,382 C924,405 923.2,430 921.4,451.2" stroke="#ffff00" stroke-width="2"/>
<path d="M919.1,477.2 C916.5,500 913,522 908.9,543" stroke="#ffff00" stroke-width="2"/>
<polygon points="922,388 926,388 926,391.5 927,391.5 927,395 923,395 923,392 922,392" fill="#ffff00" stroke="none"/>
<polygon points="911.5,527.5 913,533.5 912.2,537.5 909.4,543.8 908.2,543.8 908,530.5" fill="#ffff00" stroke="none"/>
<!-- red tick -->
<rect x="789" y="371" width="2" height="12" fill="#ff1e00" stroke="none"/>
</g>
<!-- points -->
<g shape-rendering="crispEdges" stroke="none">
<circle cx="660.9" cy="229.9" r="4.2" fill="#00ff00"/>
<circle cx="660.9" cy="283.6" r="4.2" fill="#00ff00"/>
<circle cx="651.5" cy="330.5" r="4.2" fill="#00ff00"/>
<circle cx="801.7" cy="455.4" r="4.4" fill="#00ff00"/>
<circle cx="801.5" cy="310.8" r="4.4" fill="#ff2000"/>
</g>
<g shape-rendering="crispEdges" fill="none" stroke="#ffff00" stroke-width="1.75">
<line x1="801.3" y1="310.6" x2="812" y2="316.7"/>
<line x1="802" y1="304" x2="802" y2="310"/>
<line x1="801.3" y1="455.3" x2="810" y2="462.4"/>
<line x1="661" y1="275" x2="661" y2="283.5"/>
<line x1="650" y1="277.4" x2="660.4" y2="283.5"/>
</g>
<!-- texts -->
<g font-family="Liberation Sans, sans-serif" fill="#e0e020">
<text transform="matrix(0.9,0.53,0,1,718.5,198)" font-size="16">45 mm</text>
<text transform="matrix(0.867,0.486,0,1,494.5,192.8)" font-size="16">R15 mm</text>
</g>
<text transform="matrix(1,0.61,0,1,897.3,457)" font-size="16" font-family="Liberation Serif, serif" fill="#e6da22" stroke="#e6da22" stroke-width="0.25">12.11 °</text>

</svg>
</div>
</body>
</html>
